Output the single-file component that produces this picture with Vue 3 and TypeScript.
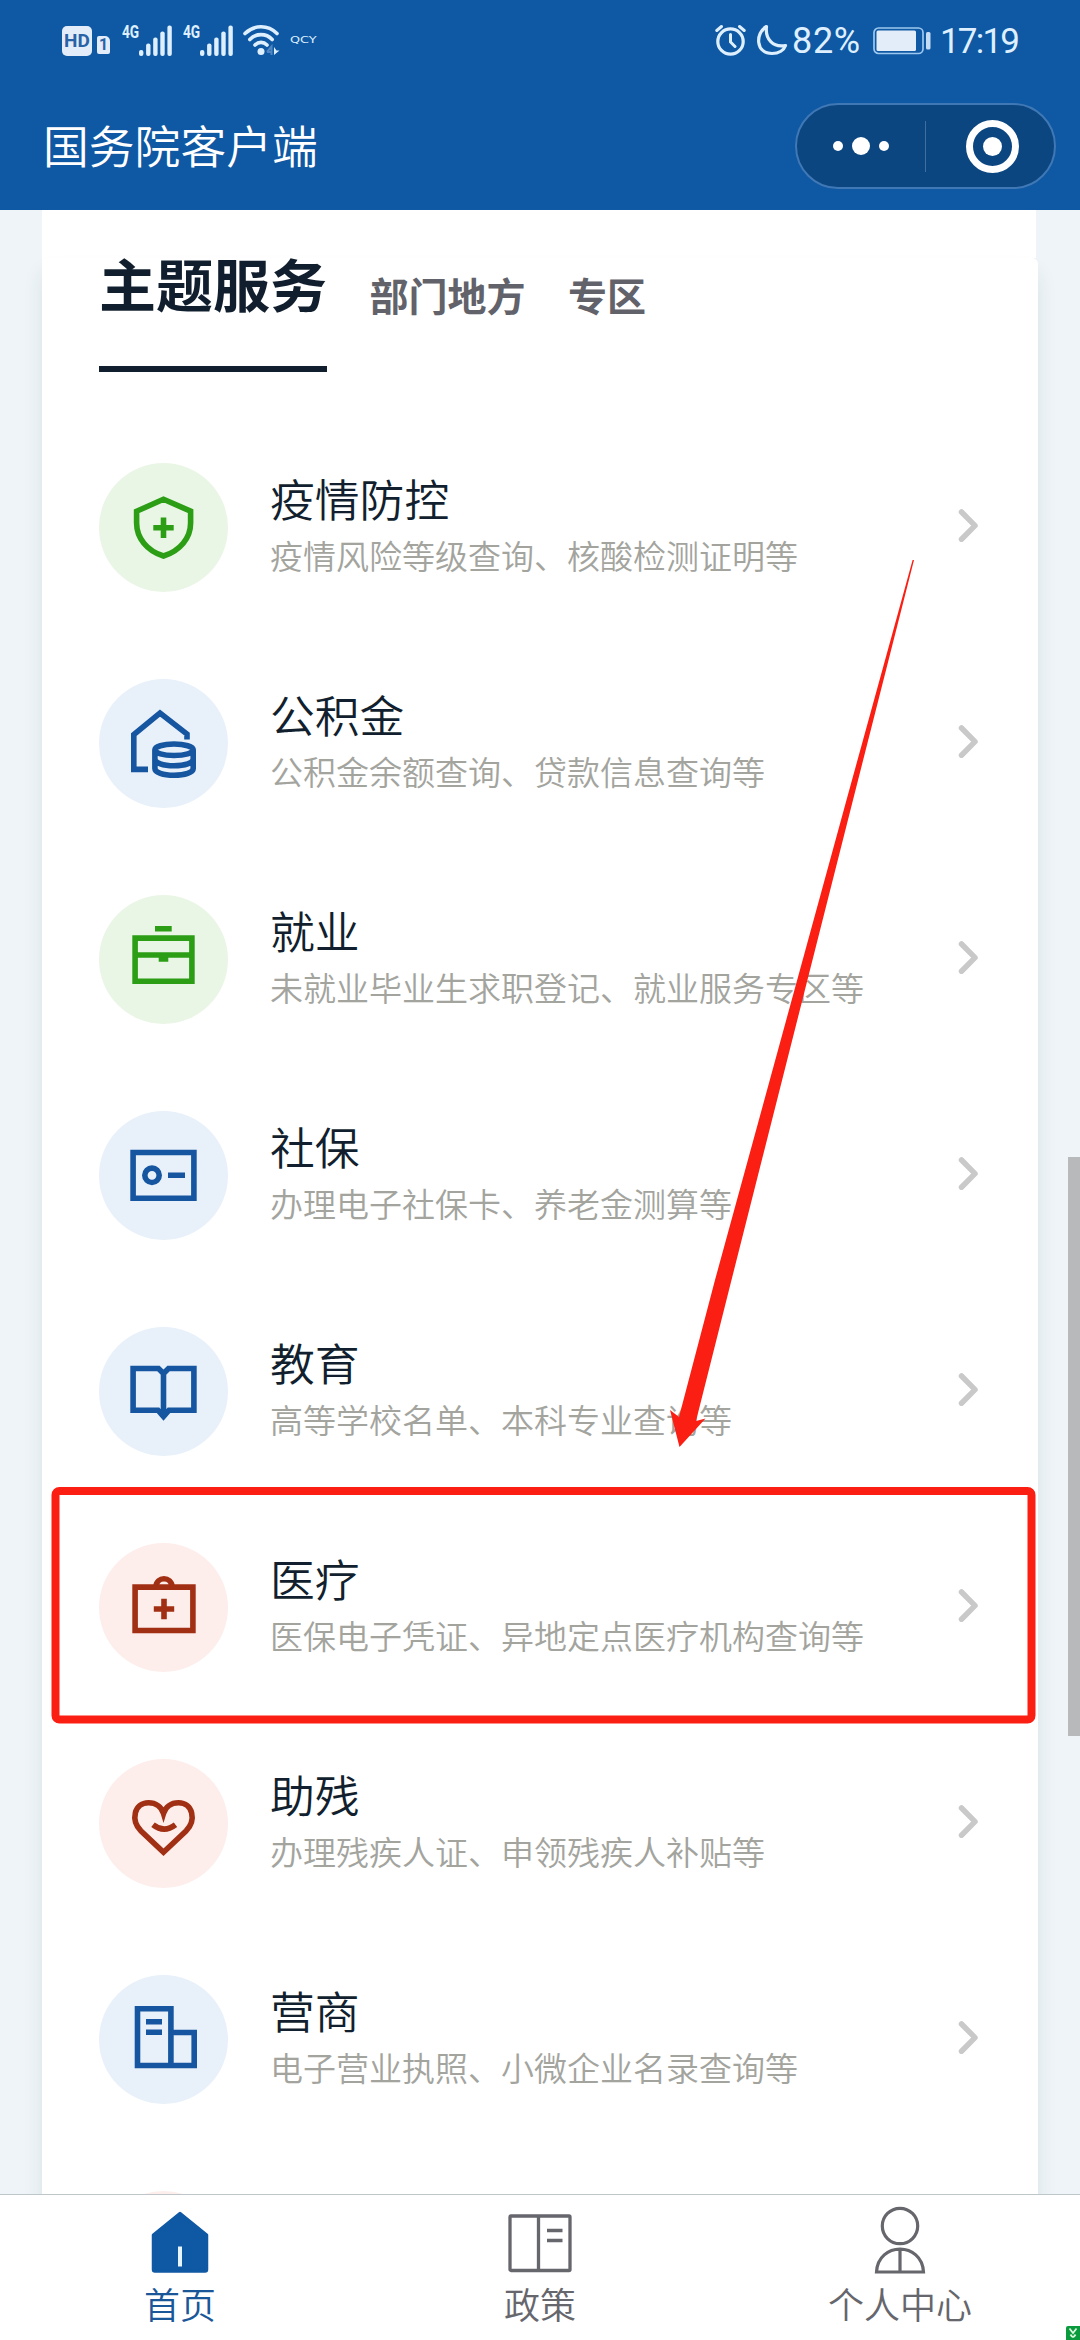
<script setup lang="ts">
interface Service {
  key: string
  title: string
  desc: string
  tone: 'green' | 'blue' | 'red'
}

const tabs: string[] = ['主题服务', '部门地方', '专区']

const services: Service[] = [
  { key: 'shield', title: '疫情防控', desc: '疫情风险等级查询、核酸检测证明等', tone: 'green' },
  { key: 'fund', title: '公积金', desc: '公积金余额查询、贷款信息查询等', tone: 'blue' },
  { key: 'job', title: '就业', desc: '未就业毕业生求职登记、就业服务专区等', tone: 'green' },
  { key: 'card', title: '社保', desc: '办理电子社保卡、养老金测算等', tone: 'blue' },
  { key: 'book', title: '教育', desc: '高等学校名单、本科专业查询等', tone: 'blue' },
  { key: 'medical', title: '医疗', desc: '医保电子凭证、异地定点医疗机构查询等', tone: 'red' },
  { key: 'heart', title: '助残', desc: '办理残疾人证、申领残疾人补贴等', tone: 'red' },
  { key: 'building', title: '营商', desc: '电子营业执照、小微企业名录查询等', tone: 'blue' },
]

const glyphs: Record<string, string> = {
  shield: 'M64.5 36.3 91.6 48.2V60C91.6 75 81 88 64.5 93 48 88 37.6 75 37.6 60V48.2Z M54.3 64.7H74.7 M64.5 54.5V74.9',
  fund: 'M49 90.4H34.8V55.5L61 34 88 55V60.5 M55.9 71V89.5C55.9 93.5 64 96.3 75 96.3S94.2 93.5 94.2 89.5V71 M55.9 80C55.9 84 64 86.8 75 86.8S94.2 84 94.2 80 M94.2 70.8C94.2 74 86 76.5 75 76.5S55.9 74 55.9 70.8 64 65 75 65 94.2 67.6 94.2 70.8Z',
  job: 'M36.1 43.1H92.9V86.2H36.1Z M56 33.8H72.7 M36 60H93 M59.7 63.9H69.3',
  card: 'M34.1 41.5H94.9V87.2H34.1Z M60.2 64.3A7.2 7.2 0 1 1 45.8 64.3 7.2 7.2 0 1 1 60.2 64.3Z M69 64.3H86',
  book: 'M34.1 41.5H59.5L64.5 46.5 69.5 41.5H94.9V83.2H70L64.5 89.5 59 83.2H34.1Z M64.5 46V89',
  medical: 'M36.1 44.1H93.9V87.5H36.1Z M56.8 44C57.5 33 72.5 33 73.2 44 M54.8 66H75.2 M65 55.8V76.2',
  heart: 'M64.5 93.2 42 72C31.5 61.5 35 43.8 49.5 43.8 57 43.8 62.5 48 64.5 54.5 66.5 48 72 43.8 79.5 43.8 94 43.8 97.5 61.5 87 72Z M54 65.8Q65 74.5 76.5 65.8',
  building: 'M38.5 33.8H71.9V90.5H38.5Z M71.9 57.5H95.2V90.5H71.9 M47 46.7H63 M47 57.3H63',
}

const bars: number[] = [6, 12.5, 18.5, 24.5, 30.5]
</script>

<template>
  <div class="phone">
    <header class="header">
      <div class="status">
        <div class="status-left">
          <span class="hd">HD</span>
          <span class="sim">1</span>
          <div v-for="n in 2" :key="n" class="signal">
            <span class="net">4G</span>
            <svg class="bars" width="34" height="31" viewBox="0 0 34 31">
              <rect v-for="(h, i) in bars" :key="i" :x="i * 7.1" :y="31 - h" width="4.4" :height="h" rx="2" />
            </svg>
          </div>
          <svg class="wifi" width="37" height="32" viewBox="0 0 37 32">
            <g fill="none" stroke="#def0ff" stroke-width="3.6" stroke-linecap="round">
              <path d="M2 9.5C11 .5 25 .5 34 9.5" />
              <path d="M6.8 15.5C13 9 23 9 29.2 15.5" />
              <path d="M12 21C15.5 17.5 20.5 17.5 24 21" />
            </g>
            <circle cx="18" cy="27.5" r="3.5" fill="#def0ff" />
            <path d="M24 28 28.5 22.5V31M24 28H29.5" fill="none" stroke="#4f86c2" stroke-width="2" />
            <path d="M31 23V31L36.5 26.5H33.5Z" fill="#def0ff" />
          </svg>
          <span class="qcy">QCY</span>
        </div>
        <div class="status-right">
          <svg class="alarm" width="31" height="32" viewBox="0 0 31 32" fill="none" stroke="#def0ff" stroke-linecap="round">
            <circle cx="15.5" cy="17.5" r="12.7" stroke-width="3.2" />
            <path d="M15.5 10.5V18L20 22.5M1.8 6.5 6.5 2.5M29.2 6.5 24.5 2.5" stroke-width="3" />
          </svg>
          <svg class="moon" width="32" height="32" viewBox="0 0 32 32">
            <path d="M10.5 2.5C-1 9 -.5 29.5 16 29.5 23 29.5 28 26 29.5 21.5 17 24 9 15 10.5 2.5Z" fill="none" stroke="#def0ff" stroke-width="3.2" stroke-linejoin="round" />
          </svg>
          <span class="percent">82%</span>
          <svg class="battery" width="59" height="28" viewBox="0 0 59 28">
            <rect x="1" y="1" width="49" height="25.5" rx="4.5" fill="none" stroke="#9cc7ee" stroke-width="1.7" />
            <rect x="3.5" y="3.5" width="39.5" height="20.5" rx="1.5" fill="#e3ecf9" />
            <rect x="53" y="5" width="4.5" height="17.5" rx="1.5" fill="#c5dcf5" />
          </svg>
          <span class="clock">17:19</span>
        </div>
      </div>
      <div class="title-bar">
        <h1 class="app-title">国务院客户端</h1>
        <div class="capsule">
          <div class="more"><i></i><i class="big"></i><i></i></div>
          <div class="divider"></div>
          <div class="target"><i></i></div>
        </div>
      </div>
    </header>

    <main class="content">
      <div class="card-top"></div>
      <section class="card">
        <nav class="tabs">
          <span v-for="(tab, i) in tabs" :key="tab" class="tab" :class="{ active: i === 0 }">{{ tab }}</span>
        </nav>
        <ul class="list">
          <li v-for="item in services" :key="item.key" class="row">
            <div class="badge" :class="item.tone">
              <svg viewBox="0 0 129 129"><path :d="glyphs[item.key]" /></svg>
            </div>
            <div class="texts">
              <div class="name">{{ item.title }}</div>
              <div class="desc">{{ item.desc }}</div>
            </div>
            <svg class="chevron" width="24" height="38" viewBox="0 0 24 38">
              <path d="M4.5 5 18 18.6 4.5 32.2" />
            </svg>
          </li>
          <li class="row"><div class="badge red"></div></li>
        </ul>
      </section>
      <div class="scrollbar"></div>
    </main>

    <footer class="tabbar">
      <div class="item current">
        <svg width="64" height="68" viewBox="0 0 64 68">
          <path d="M32 5.5 58.5 27V61.5Q58.5 63 57 63H7Q5.5 63 5.5 61.5V27Z" fill="#0f58a3" stroke="#0f58a3" stroke-width="3.5" stroke-linejoin="round" />
          <path d="M32 38.5V58.5" stroke="#e6f6ff" stroke-width="4" />
        </svg>
        <span>首页</span>
      </div>
      <div class="item">
        <svg width="64" height="68" viewBox="0 0 64 68" fill="none" stroke="#66666d" stroke-width="3.3">
          <rect x="2" y="8" width="60" height="54.5" rx="1" />
          <path d="M30.5 8V62M39 22.5H54.5M39 32.5H54.5" />
        </svg>
        <span>政策</span>
      </div>
      <div class="item">
        <svg width="64" height="76" viewBox="0 0 64 76" fill="none" stroke="#66666d" stroke-width="3.2">
          <circle cx="32" cy="22" r="17.7" />
          <path d="M8.5 68C10 37.5 54 37.5 55.5 68ZM32 46V68" />
        </svg>
        <span>个人中心</span>
      </div>
      <svg class="corner" width="14" height="14" viewBox="0 0 14 14">
        <rect width="16" height="16" rx="2" fill="#0b9a3d" />
        <path d="M3.5 2.5 7 7 10.5 2.5M4.5 8.5Q7 13.5 9.5 8.5" fill="none" stroke="#d9f7dc" stroke-width="1.8" />
      </svg>
    </footer>

    <svg class="marks" width="1080" height="2340" viewBox="0 0 1080 2340">
      <rect x="55.5" y="1491" width="976" height="228.5" rx="4" fill="none" stroke="#fb1e12" stroke-width="8" />
      <path d="M912.6 560H914L853 800 731.5 1280 696 1421 705.5 1418.5 679.5 1447 670 1410 679 1417 715 1280 846.5 800Z" fill="#fb1e12" />
    </svg>
  </div>
</template>

<style>
body {
  margin: 0;
  background: #eef4f7;
}
</style>

<style scoped>
.phone {
  position: relative;
  width: 1080px;
  height: 2340px;
  overflow: hidden;
  display: flex;
  flex-direction: column;
  background: #eef4f7;
  font-family: "Noto Sans CJK SC", "Noto Sans", sans-serif;
}
svg {
  display: block;
  flex: none;
}
.header {
  height: 210px;
  flex: none;
  background: #0f58a3;
  color: #fff;
}
.status {
  height: 82px;
  display: flex;
  justify-content: space-between;
  padding: 0 62px;
  color: #def0ff;
  font-family: Roboto, sans-serif;
}
.status-left,
.status-right {
  display: flex;
  align-items: flex-start;
}
.hd {
  width: 30px;
  height: 30px;
  margin-top: 26px;
  border-radius: 5px;
  background: #e3ecf9;
  color: #2a62a6;
  font: 700 19px/30px Roboto, sans-serif;
  text-align: center;
}
.sim {
  width: 13px;
  height: 18px;
  margin: 36px 12px 0 5px;
  border-radius: 2px 5px 2px 2px;
  background: #e3ecf9;
  color: #2a62a6;
  font: 700 16px/18px Roboto, sans-serif;
  text-align: center;
}
.signal {
  display: flex;
  width: 61px;
}
.net {
  width: 17px;
  margin-top: 22px;
  font: 700 19px/20px Roboto, sans-serif;
  transform: scaleX(0.72);
  transform-origin: left;
}
.bars {
  margin-top: 24.5px;
  fill: #def0ff;
}
.wifi {
  margin: 24px 0 0 -1px;
}
.qcy {
  width: 26px;
  margin: 36px 0 0 10px;
  font: 400 8px/10px "DejaVu Sans", sans-serif;
  transform: scaleX(1.6);
  transform-origin: left;
}
.alarm {
  margin-top: 24px;
}
.moon {
  margin: 24px 0 0 10px;
}
.percent,
.clock {
  margin-top: 21px;
  font-size: 35px;
  line-height: 41px;
  white-space: nowrap;
}
.percent {
  width: 69px;
  margin-left: 4px;
  font-size: 36px;
  letter-spacing: 0.7px;
}
.clock {
  width: 78px;
  letter-spacing: -1.8px;
}
.battery {
  margin: 27px 8px 0 12px;
}
.title-bar {
  display: flex;
  align-items: center;
  justify-content: space-between;
  height: 128px;
  padding: 0 24px 0 43px;
}
.app-title {
  margin: 0 0 5px;
  font-size: 45.8px;
  line-height: 60px;
  font-weight: 350;
}
.capsule {
  box-sizing: border-box;
  width: 261px;
  height: 86px;
  border: 2px solid #3f78b5;
  border-radius: 43px;
  background: #0c4681;
  display: flex;
  align-items: center;
}
.more {
  display: flex;
  width: 128px;
  align-items: center;
  justify-content: center;
  gap: 9px;
}
.more i {
  width: 10px;
  height: 10px;
  border-radius: 50%;
  background: #fff;
}
.more .big {
  width: 18px;
  height: 18px;
}
.divider {
  width: 1px;
  height: 51px;
  background: #3f6fa1;
}
.target {
  box-sizing: border-box;
  width: 53px;
  height: 53px;
  margin-left: 40px;
  border: 7px solid #fff;
  border-radius: 50%;
  display: flex;
  align-items: center;
  justify-content: center;
}
.target i {
  width: 19px;
  height: 19px;
  border-radius: 50%;
  background: #fff;
}
.content {
  position: relative;
  height: 1984px;
  flex: none;
  overflow: hidden;
}
.card-top {
  width: 994px;
  height: 48px;
  margin-left: 42px;
  background: #fff;
}
.card {
  box-sizing: border-box;
  width: 996px;
  height: 2100px;
  margin-left: 42px;
  padding: 0 57px;
  background: #fff;
  border-top-right-radius: 6px;
  box-shadow: 0 14px 20px rgba(40, 70, 90, 0.09);
}
.tabs {
  display: flex;
  align-items: flex-start;
  gap: 42.5px;
  height: 205px;
}
.tab {
  color: #62626b;
  font-size: 39px;
  line-height: 54px;
  font-weight: 600;
  margin-top: 9px;
}
.tab.active {
  box-sizing: border-box;
  height: 131px;
  margin-top: -17px;
  border-bottom: 6px solid #101e2e;
  color: #101e2e;
  font-size: 57px;
  line-height: 82px;
}
.list {
  list-style: none;
  margin: 0;
  padding: 0;
}
.row {
  display: flex;
  align-items: center;
  height: 129px;
  margin-bottom: 87px;
}
.badge {
  width: 129px;
  height: 129px;
  border-radius: 50%;
  flex: none;
}
.badge path {
  fill: none;
  stroke: currentColor;
  stroke-width: 5.6;
}
.badge.green {
  background: #eaf6e5;
  color: #2c9e16;
}
.badge.blue {
  background: #e8f1fa;
  color: #1655a0;
}
.badge.red {
  background: #fdeeec;
  color: #a12f13;
}
.texts {
  flex: 1;
  margin-left: 42px;
  margin-bottom: 10px;
  font-weight: 350;
}
.name {
  color: #121f2e;
  font-size: 44.8px;
  line-height: 64px;
}
.desc {
  color: #a3a49e;
  font-size: 33px;
  line-height: 50px;
}
.chevron {
  margin-bottom: 3px;
  fill: none;
  stroke: #c9c9c9;
  stroke-width: 5.5;
  stroke-linecap: round;
  stroke-linejoin: round;
}
.scrollbar {
  position: absolute;
  right: 0;
  top: 947px;
  width: 12px;
  height: 579px;
  background: #b8b9ba;
}
.tabbar {
  position: relative;
  box-sizing: border-box;
  height: 146px;
  border-top: 1px solid #bfc6c9;
  background: #fff;
  display: flex;
}
.item {
  flex: 1;
  display: flex;
  flex-direction: column;
  align-items: center;
  color: #66666d;
  font-size: 36px;
  line-height: 48px;
  font-weight: 350;
}
.item svg {
  height: 68px;
  margin: 13px 0 3px;
}
.item:nth-child(3) svg {
  height: 76px;
  margin: 9px 0 -1px;
}
.item.current {
  color: #1a5799;
}
.corner {
  position: absolute;
  right: 0;
  bottom: 0;
}
.marks {
  position: absolute;
  left: 0;
  top: 0;
  pointer-events: none;
}
</style>
